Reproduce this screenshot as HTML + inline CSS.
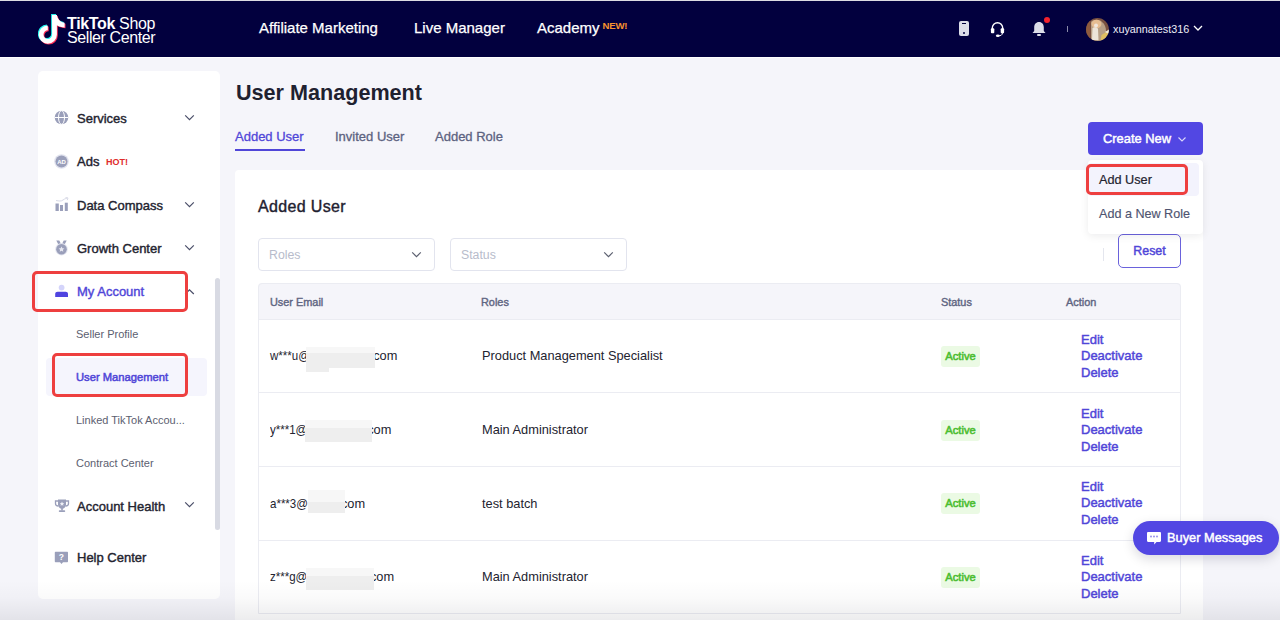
<!DOCTYPE html>
<html><head><meta charset="utf-8">
<style>
*{margin:0;padding:0;box-sizing:border-box;}
html,body{width:1280px;height:620px;overflow:hidden;background:#f5f5fa;font-family:"Liberation Sans",sans-serif;position:relative;}
.a{position:absolute;white-space:nowrap;}
#topline{left:0;top:0;width:1280px;height:1px;background:#dcdce2;}
#hdr{left:0;top:1px;width:1280px;height:56px;background:#02003e;}
#hdrline{left:0;top:57px;width:1280px;height:1px;background:#ffffff;}
.nav{color:#fff;font-size:15px;top:19px;line-height:17px;-webkit-text-stroke:0.25px #fff;}
.side{left:38px;top:71px;width:182px;height:528px;background:#fff;border-radius:5px;}
.si{color:#23232f;font-size:13px;line-height:16px;-webkit-text-stroke:0.4px #23232f;}
.ss{color:#5c6070;font-size:11px;line-height:14px;}
.chev{width:9px;height:6px;}
.card{left:235px;top:170px;width:968px;height:460px;background:#fff;border-radius:4px;}
.th{color:#5f6582;font-size:10.9px;-webkit-text-stroke:0.4px #5f6582;line-height:14px;top:294.7px;}
.td{color:#23232f;font-size:12.8px;line-height:16px;}
.tag{background:#ebfae4;color:#4bbd30;font-size:11.2px;-webkit-text-stroke:0.55px #4bbd30;border-radius:3px;width:39px;height:21px;line-height:21px;text-align:center;}
.act{color:#5046d8;font-size:13px;-webkit-text-stroke:0.45px #5046d8;line-height:16.5px;}
.red{border:3px solid #ee3f3f;border-radius:5px;}
.blk{background:#efefef;}
</style></head><body>
<div class="a" id="topline"></div>
<div class="a" id="hdr"></div>
<div class="a" id="hdrline"></div>

<!-- logo -->
<svg class="a" style="left:38px;top:13.5px" width="28" height="31" viewBox="-1 -1 28 31">
  <path transform="translate(-0.9,-0.9)" d="M13 0H17.9C18.4 4 21.4 7.3 25.6 7.8V12.4C22.6 12.4 19.9 11.5 17.9 10.2V19.6A9.1 9.1 0 1 1 8.8 10.5V15.3A4.3 4.3 0 1 0 13.1 19.6Z" fill="#25f4ee"/>
  <path transform="translate(0.9,0.9)" d="M13 0H17.9C18.4 4 21.4 7.3 25.6 7.8V12.4C22.6 12.4 19.9 11.5 17.9 10.2V19.6A9.1 9.1 0 1 1 8.8 10.5V15.3A4.3 4.3 0 1 0 13.1 19.6Z" fill="#fe2c55"/>
  <path d="M13 0H17.9C18.4 4 21.4 7.3 25.6 7.8V12.4C22.6 12.4 19.9 11.5 17.9 10.2V19.6A9.1 9.1 0 1 1 8.8 10.5V15.3A4.3 4.3 0 1 0 13.1 19.6Z" fill="#fff"/>
</svg>
<div class="a" style="left:67px;top:16px;color:#fff;font-size:16px;line-height:16px;letter-spacing:-0.35px;"><b>TikTok</b> Shop</div>
<div class="a" style="left:67px;top:29.5px;color:#fff;font-size:16px;line-height:16px;letter-spacing:-0.4px;">Seller Center</div>

<div class="a nav" style="left:259px;">Affiliate Marketing</div>
<div class="a nav" style="left:414px;">Live Manager</div>
<div class="a nav" style="left:537px;">Academy</div>
<div class="a" style="left:602.5px;top:21px;color:#f7922e;font-size:9.6px;letter-spacing:-0.2px;font-weight:bold;line-height:10px;">NEW!</div>

<!-- right header icons -->
<div class="a" style="left:959px;top:21px;width:10px;height:15px;background:#dcdde8;border-radius:2px;"></div>
<div class="a" style="left:962px;top:23px;width:4px;height:1px;background:#02003e;"></div>
<div class="a" style="left:963px;top:32px;width:2px;height:2px;background:#02003e;border-radius:1px;"></div>
<svg class="a" style="left:990px;top:21px" width="15" height="16" viewBox="0 0 15 16"><path d="M2.3 9V7a5.2 5.2 0 0 1 10.4 0v2" fill="none" stroke="#fff" stroke-width="1.4"/><rect x="0.9" y="7.3" width="3.4" height="5" rx="1" fill="#fff"/><rect x="10.7" y="7.3" width="3.4" height="5" rx="1" fill="#fff"/><path d="M12.4 12c0 2-1.5 2.8-4.2 2.8" fill="none" stroke="#fff" stroke-width="1"/><ellipse cx="7.8" cy="14.7" rx="1.9" ry="1.2" fill="#fff"/></svg>
<svg class="a" style="left:1032px;top:21px" width="14" height="15" viewBox="0 0 14 15"><path d="M7 1c3 0 4.8 2.3 4.8 5.2V10l1.7 2H.5l1.7-2V6.2C2.2 3.3 4 1 7 1z" fill="#dcdde8"/><rect x="5" y="13" width="4" height="2" rx="1" fill="#dcdde8"/></svg>
<div class="a" style="left:1044px;top:17px;width:6px;height:6px;background:#f5222d;border-radius:50%;"></div>
<div class="a" style="left:1067px;top:26px;width:1px;height:6px;background:#8a8aa8;"></div>
<svg class="a" style="left:1086px;top:17.5px" width="23" height="23" viewBox="0 0 23 23"><defs><clipPath id="cc"><circle cx="11.5" cy="11.5" r="11.4"/></clipPath></defs><g clip-path="url(#cc)"><rect width="23" height="23" fill="#7a5140"/><rect x="0" y="0" width="4" height="23" fill="#8e5b3e"/><path d="M5 4c2-3 9-3 11 0 3 2 4 6 4 9v10H5z" fill="#b79f86"/><ellipse cx="10.5" cy="6" rx="5" ry="4.2" fill="#e6bd92"/><ellipse cx="10" cy="7.5" rx="2" ry="2" fill="#f0e6dc"/><path d="M6.5 10c1.5-1 5-1 5.5 1l.5 11H6z" fill="#ece4d8"/><path d="M15.5 17l7-4.5V23h-8z" fill="#e0bf62"/><path d="M19 14l4-2.5V16z" fill="#f3eee0"/></g></svg>
<div class="a" style="left:1113px;top:21.5px;color:#eeeef5;font-size:10.8px;line-height:15px;">xuyannatest316</div>
<svg class="a" style="left:1193px;top:25px" width="10" height="6" viewBox="0 0 10 6"><path d="M1 1l4 4 4-4" fill="none" stroke="#fff" stroke-width="1.3"/></svg>

<!-- sidebar -->
<div class="a side"></div>
<div class="a" style="left:215px;top:278px;width:5px;height:252px;background:#d8dae3;border-radius:3px;"></div>


<!-- sidebar icons -->
<svg class="a" style="left:54px;top:110px" width="15" height="15" viewBox="0 0 15 15"><circle cx="7.5" cy="7.5" r="6.8" fill="#9a9fba"/><path d="M0.7 7.5h13.6" stroke="#fff" stroke-width="1"/><ellipse cx="7.5" cy="7.5" rx="3" ry="6.8" fill="none" stroke="#fff" stroke-width="1"/></svg>
<svg class="a" style="left:54px;top:154px" width="15" height="15" viewBox="0 0 15 15"><circle cx="7.5" cy="7.5" r="7.3" fill="#e1e3ee"/><circle cx="7.5" cy="7.5" r="6" fill="#9a9fba"/><text x="7.5" y="9.7" text-anchor="middle" font-family="Liberation Sans" font-weight="bold" font-size="6" fill="#fff">AD</text></svg>
<svg class="a" style="left:54px;top:197px" width="15" height="15" viewBox="0 0 15 15"><rect x="1.5" y="6.5" width="3.3" height="7.5" fill="#9a9fba"/><rect x="6" y="8" width="3" height="6" fill="#9a9fba"/><rect x="10.8" y="5.7" width="3" height="8.3" fill="#9a9fba"/><path d="M2 3.5c3 .5 5 1 7-.5s3-1.5 4-1.8" fill="none" stroke="#d7d9e6" stroke-width="1"/><path d="M11.5 0.6l2.5.3-.8 2.3" fill="none" stroke="#d7d9e6" stroke-width="1"/></svg>
<svg class="a" style="left:54px;top:240px" width="15" height="16" viewBox="0 0 15 16"><path d="M2.3 0.6h3l1.8 3.6-2.2 1.2zM12.7 0.6h-3L7.9 4.2l2.2 1.2z" fill="#9a9fba"/><circle cx="7.5" cy="9.2" r="6.2" fill="#e1e3ee"/><circle cx="7.5" cy="9.2" r="5.3" fill="#9a9fba"/><path d="M7.5 6.4l.9 1.8 2 .2-1.5 1.4.4 2-1.8-1-1.8 1 .4-2-1.5-1.4 2-.2z" fill="#e8e9f2"/></svg>
<svg class="a" style="left:54px;top:284px" width="15" height="14" viewBox="0 0 15 14"><circle cx="7.6" cy="3.6" r="2.9" fill="#d4d4fa"/><path d="M1.2 13V10c0-1.4 1-2.2 2.4-2.2h8c1.4 0 2.4.8 2.4 2.2v3z" fill="#4f44e0"/></svg>
<svg class="a" style="left:54px;top:499px" width="16" height="14" viewBox="0 0 16 14"><path d="M4 .5h8v5c0 2.4-1.8 4.2-4 4.2S4 7.9 4 5.5z" fill="#9a9fba"/><path d="M4 2H1.5v2.5C1.5 6 2.7 7 4.3 7M12 2h2.5v2.5C14.5 6 13.3 7 11.7 7" fill="none" stroke="#9a9fba" stroke-width="1.3"/><rect x="7.2" y="9" width="1.6" height="2.5" fill="#9a9fba"/><rect x="4.8" y="11.2" width="6.4" height="1.8" rx=".8" fill="#9a9fba"/><path d="M8 2.6l.7 1.4 1.5.2-1.1 1 .3 1.5L8 6l-1.4.7.3-1.5-1.1-1 1.5-.2z" fill="#eef0f6"/></svg>
<svg class="a" style="left:54px;top:551px" width="15" height="14" viewBox="0 0 15 14"><path d="M1.8 .8h11.2c.6 0 1 .4 1 1v8.4c0 .6-.4 1-1 1H9l-1.5 1.8L6 11.2H1.8c-.6 0-1-.4-1-1V1.8c0-.6.4-1 1-1z" fill="#9a9fba"/><text x="7.4" y="9.4" text-anchor="middle" font-family="Liberation Sans" font-weight="bold" font-size="8.5" fill="#fff">?</text></svg>
<svg class="a" style="left:184px;top:114px" width="11" height="8" viewBox="0 0 11 8"><path d="M1.2 1.4l4.3 4.2 4.3-4.2" fill="none" stroke="#4a4e68" stroke-width="1.2"/></svg>
<svg class="a" style="left:184px;top:201px" width="11" height="8" viewBox="0 0 11 8"><path d="M1.2 1.4l4.3 4.2 4.3-4.2" fill="none" stroke="#4a4e68" stroke-width="1.2"/></svg>
<svg class="a" style="left:184px;top:244px" width="11" height="8" viewBox="0 0 11 8"><path d="M1.2 1.4l4.3 4.2 4.3-4.2" fill="none" stroke="#4a4e68" stroke-width="1.2"/></svg>
<svg class="a" style="left:184px;top:288px" width="11" height="8" viewBox="0 0 11 8"><path d="M1.2 6l4.3-4.2L9.8 6" fill="none" stroke="#4a4e68" stroke-width="1.2"/></svg>
<svg class="a" style="left:184px;top:501px" width="11" height="8" viewBox="0 0 11 8"><path d="M1.2 1.4l4.3 4.2 4.3-4.2" fill="none" stroke="#4a4e68" stroke-width="1.2"/></svg>
<div class="a si" style="left:77px;top:110.8px;">Services</div>
<div class="a si" style="left:77px;top:154.3px;">Ads</div>
<div class="a" style="left:106px;top:158px;color:#e02b2b;font-size:9px;font-weight:bold;line-height:9px;">HOT!</div>
<div class="a si" style="left:77px;top:198.3px;">Data Compass</div>
<div class="a si" style="left:77px;top:241.3px;">Growth Center</div>
<div class="a si" style="left:77px;top:283.9px;color:#5046d8;-webkit-text-stroke:0.4px #5046d8;">My Account</div>
<div class="a ss" style="left:76px;top:327.1px;">Seller Profile</div>
<div class="a" style="left:46px;top:358px;width:161px;height:38px;background:#f5f5fd;border-radius:4px;"></div>
<div class="a ss" style="left:76px;top:370.1px;color:#5046d8;font-size:11.2px;-webkit-text-stroke:0.5px #5046d8;">User Management</div>
<div class="a ss" style="left:76px;top:413.1px;">Linked TikTok Accou...</div>
<div class="a ss" style="left:76px;top:455.9px;">Contract Center</div>
<div class="a si" style="left:77px;top:498.6px;">Account Health</div>
<div class="a si" style="left:77px;top:550.2px;">Help Center</div>

<!-- main -->
<div class="a" style="left:236px;top:81px;color:#1f2130;font-size:21.6px;font-weight:bold;line-height:24px;">User Management</div>
<div class="a" style="left:235px;top:129px;color:#5046d8;font-size:13px;line-height:16px;-webkit-text-stroke:0.3px #5046d8;">Added User</div>
<div class="a" style="left:235px;top:149px;width:70px;height:2px;background:#5046d8;"></div>
<div class="a" style="left:335px;top:129px;color:#5c6280;font-size:13px;line-height:16px;-webkit-text-stroke:0.3px #5c6280;">Invited User</div>
<div class="a" style="left:435px;top:129px;color:#5c6280;font-size:13px;line-height:16px;-webkit-text-stroke:0.3px #5c6280;">Added Role</div>

<div class="a card"></div>
<div class="a" style="left:258px;top:197px;color:#1f2130;font-size:16px;letter-spacing:0.35px;line-height:20px;-webkit-text-stroke:0.4px #1f2130;">Added User</div>

<div class="a" style="left:258px;top:238px;width:177px;height:33px;border:1px solid #e2e4ee;border-radius:4px;"></div>
<div class="a" style="left:269px;top:247px;color:#b8bccb;font-size:12.3px;line-height:16px;">Roles</div>
<div class="a" style="left:450px;top:238px;width:177px;height:33px;border:1px solid #e2e4ee;border-radius:4px;"></div>
<div class="a" style="left:461px;top:247px;color:#b8bccb;font-size:12.3px;line-height:16px;">Status</div>
<svg class="a" style="left:411px;top:251px" width="11" height="8" viewBox="0 0 11 8"><path d="M1.2 1.4l4.3 4.2 4.3-4.2" fill="none" stroke="#5c6070" stroke-width="1.2"/></svg>
<svg class="a" style="left:603px;top:251px" width="11" height="8" viewBox="0 0 11 8"><path d="M1.2 1.4l4.3 4.2 4.3-4.2" fill="none" stroke="#5c6070" stroke-width="1.2"/></svg>
<div class="a" style="left:1103px;top:248px;width:1px;height:13px;background:#e4e6ee;"></div>
<div class="a" style="left:1118px;top:234px;width:63px;height:34px;border:1px solid #6a62dc;border-radius:5px;"></div>
<div class="a" style="left:1118px;top:243px;width:63px;text-align:center;color:#5046d8;font-size:12.4px;-webkit-text-stroke:0.45px #5046d8;line-height:17px;">Reset</div>

<!-- table -->
<div class="a" style="left:258px;top:283px;width:923px;height:37px;background:#f5f5fa;border-radius:4px 4px 0 0;border-bottom:1px solid #ebecf2;"></div>
<div class="a" style="left:258px;top:283px;width:923px;height:331px;border:1px solid #ebecf2;border-radius:4px 4px 0 0;"></div>
<div class="a th" style="left:270px;">User Email</div>
<div class="a th" style="left:481px;">Roles</div>
<div class="a th" style="left:941px;">Status</div>
<div class="a th" style="left:1066px;">Action</div>

<div class="a" style="left:258px;top:392px;width:923px;height:1px;background:#ebecf2;"></div>
<div class="a" style="left:258px;top:466px;width:923px;height:1px;background:#ebecf2;"></div>
<div class="a" style="left:258px;top:540px;width:923px;height:1px;background:#ebecf2;"></div>

<!-- row 1 -->
<div class="a td" style="left:270px;top:348.0px;transform:scaleX(0.9);transform-origin:0 0;">w***u@</div>
<div class="a td" style="left:337.4px;width:60px;text-align:right;top:348.0px;">com</div>
<div class="a" style="left:306px;top:346.6px;width:69px;height:6.399999999999977px;background:#f7f7f7;"></div>
<div class="a" style="left:306px;top:353px;width:69px;height:15px;background:#eeeeee;"></div>
<div class="a" style="left:306px;top:368px;width:23px;height:4.300000000000011px;background:#eeeeee;"></div>
<div class="a td" style="left:482px;top:348.0px;">Product Management Specialist</div>
<div class="a tag" style="left:941px;top:346px;">Active</div>
<div class="a act" style="left:1081px;top:331.5px;">Edit<br>Deactivate<br>Delete</div>
<!-- row 2 -->
<div class="a td" style="left:270px;top:422.0px;transform:scaleX(0.9);transform-origin:0 0;">y***1@</div>
<div class="a td" style="left:331.4px;width:60px;text-align:right;top:422.0px;">com</div>
<div class="a" style="left:305px;top:419.7px;width:66.5px;height:8.300000000000011px;background:#f7f7f7;"></div>
<div class="a" style="left:305px;top:428px;width:66.5px;height:13.5px;background:#eeeeee;"></div>
<div class="a td" style="left:482px;top:422.0px;">Main Administrator</div>
<div class="a tag" style="left:941px;top:420px;">Active</div>
<div class="a act" style="left:1081px;top:405.5px;">Edit<br>Deactivate<br>Delete</div>
<!-- row 3 -->
<div class="a td" style="left:270px;top:495.5px;transform:scaleX(0.9);transform-origin:0 0;">a***3@</div>
<div class="a td" style="left:305.1px;width:60px;text-align:right;top:495.5px;">com</div>
<div class="a" style="left:308px;top:490.4px;width:37px;height:11.600000000000023px;background:#f7f7f7;"></div>
<div class="a" style="left:308px;top:502px;width:37px;height:11.399999999999977px;background:#eeeeee;"></div>
<div class="a td" style="left:482px;top:495.5px;">test batch</div>
<div class="a tag" style="left:941px;top:493px;">Active</div>
<div class="a act" style="left:1081px;top:478.5px;">Edit<br>Deactivate<br>Delete</div>
<!-- row 4 -->
<div class="a td" style="left:270px;top:569.0px;transform:scaleX(0.9);transform-origin:0 0;">z***g@</div>
<div class="a td" style="left:334.1px;width:60px;text-align:right;top:569.0px;">com</div>
<div class="a" style="left:306px;top:567.7px;width:68px;height:8.699999999999932px;background:#f7f7f7;"></div>
<div class="a" style="left:306px;top:576.4px;width:68px;height:13.600000000000023px;background:#eeeeee;"></div>
<div class="a td" style="left:482px;top:569.0px;">Main Administrator</div>
<div class="a tag" style="left:941px;top:567px;">Active</div>
<div class="a act" style="left:1081px;top:552.5px;">Edit<br>Deactivate<br>Delete</div>

<!-- Create new -->
<div class="a" style="left:1088px;top:122px;width:115px;height:33px;background:#5247e3;border-radius:4px;"></div>
<div class="a" style="left:1103px;top:131px;color:#fff;font-size:12.9px;-webkit-text-stroke:0.45px #fff;line-height:16px;">Create New</div>
<svg class="a" style="left:1178px;top:137px" width="8" height="5" viewBox="0 0 8 5"><path d="M.5.5l3.5 3.5 3.5-3.5" fill="none" stroke="#dcd8fa" stroke-width="1.1"/></svg>
<div class="a" style="left:1088px;top:160px;width:115px;height:74px;background:#fff;border-radius:4px;box-shadow:0 2px 8px rgba(0,0,30,.08);"></div>
<div class="a" style="left:1088px;top:163px;width:111px;height:33px;background:#f3f3fd;border-radius:4px;"></div>
<div class="a" style="left:1099px;top:172px;color:#23232f;font-size:12.7px;line-height:16px;-webkit-text-stroke:0.2px #23232f;">Add User</div>
<div class="a" style="left:1099px;top:206px;color:#4f5470;font-size:12.6px;line-height:16px;-webkit-text-stroke:0.15px #4f5470;">Add a New Role</div>

<!-- red boxes -->
<div class="a red" style="left:32px;top:271px;width:156px;height:41px;"></div>
<div class="a red" style="left:52px;top:353px;width:136px;height:44px;"></div>
<div class="a red" style="left:1086px;top:164px;width:102px;height:31px;"></div>

<!-- buyer messages -->
<div class="a" style="left:1133px;top:521px;width:146px;height:34px;background:#5247e3;border-radius:17px;box-shadow:0 4px 12px rgba(0,0,40,.15);"></div>
<svg class="a" style="left:1146px;top:531px" width="16" height="15" viewBox="0 0 16 15"><path d="M2.2 1h11.6c.7 0 1.2.5 1.2 1.2v7.6c0 .7-.5 1.2-1.2 1.2H10.5l-2.3 2.6V11H2.2C1.5 11 1 10.5 1 9.8V2.2C1 1.5 1.5 1 2.2 1z" fill="#fff"/><circle cx="5" cy="5.5" r="0.9" fill="#8d86e8"/><circle cx="8" cy="5.5" r="0.9" fill="#8d86e8"/><circle cx="11" cy="5.5" r="0.9" fill="#8d86e8"/></svg>
<div class="a" style="left:1167px;top:530px;color:#fff;font-size:12.8px;-webkit-text-stroke:0.45px #fff;line-height:16px;">Buyer Messages</div>

<div class="a" style="left:0;top:580px;width:1280px;height:40px;background:linear-gradient(rgba(0,0,20,0) 0%,rgba(0,0,20,.02) 45%,rgba(0,0,20,.075) 100%);"></div>
</body></html>
